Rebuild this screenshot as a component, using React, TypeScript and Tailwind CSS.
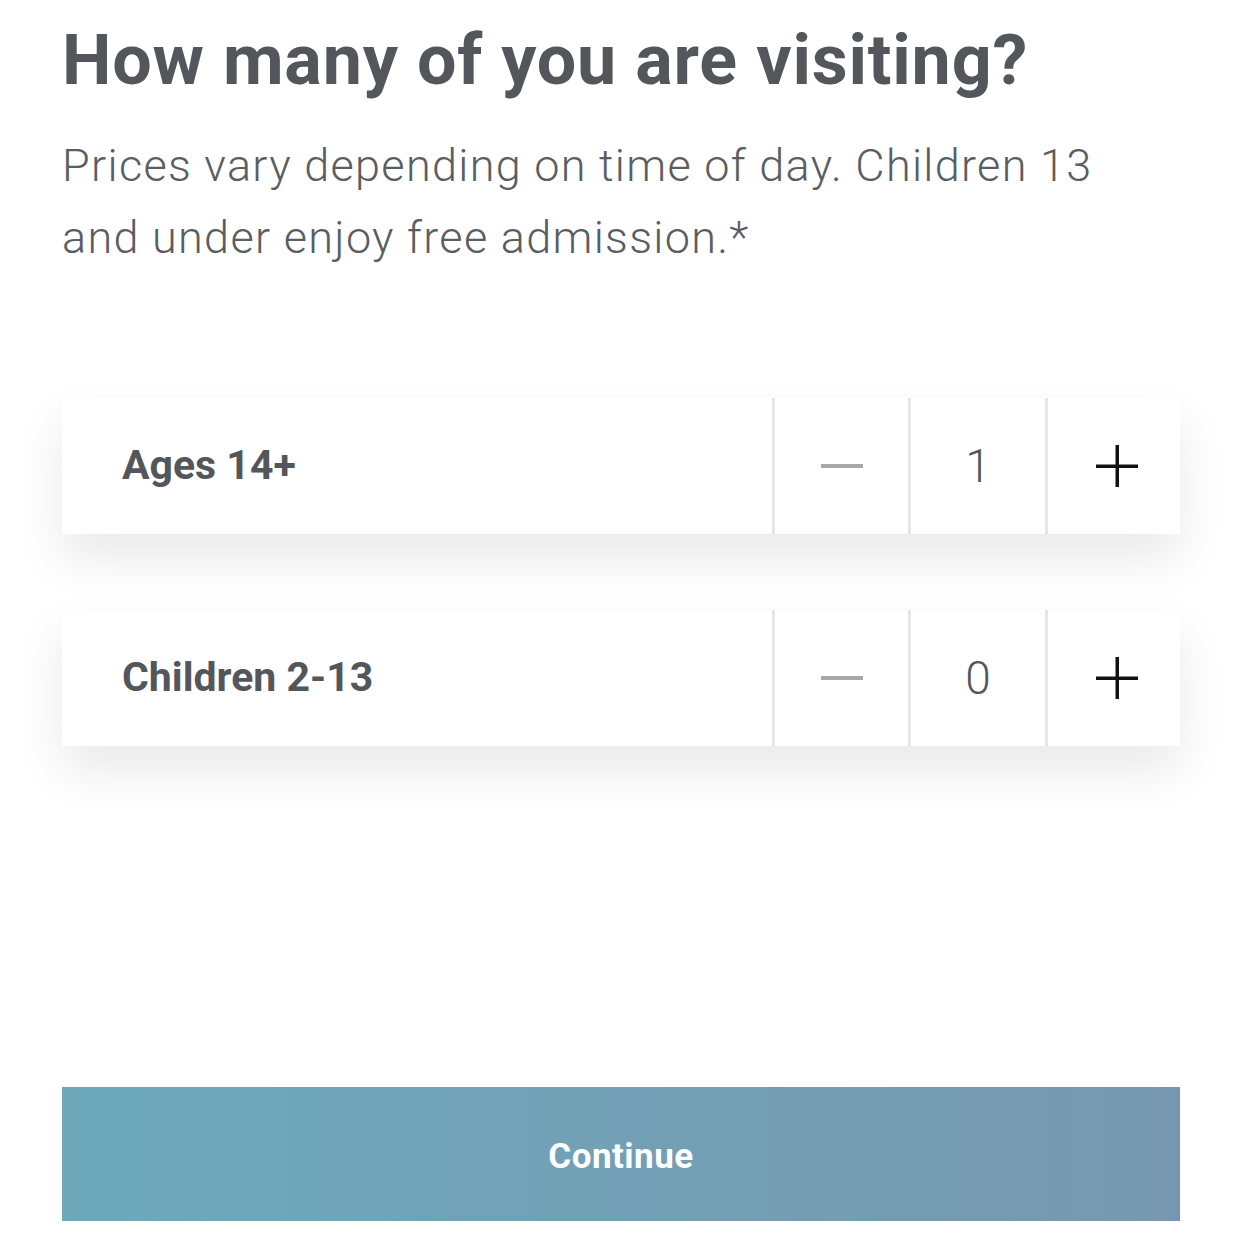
import React from "react";

function Minus() {
  return (
    <svg width="42" height="6" viewBox="0 0 42 6">
      <rect x="0" y="1" width="42" height="4" fill="#a8a8a8" />
    </svg>
  );
}

function Plus() {
  return (
    <svg width="42" height="42" viewBox="0 0 42 42">
      <rect x="0" y="19.5" width="42" height="3.5" fill="#111" />
      <rect x="19.5" y="0" width="3.5" height="42" fill="#111" />
    </svg>
  );
}

function Row({ label, value }: { label: string; value: string }) {
  return (
    <div className="flex h-[136px] bg-white shadow-[0_24px_50px_rgba(0,0,0,0.09)]">
      <div className="flex flex-1 items-center pl-[60px] text-[41px] font-bold text-[#53565a]">
        {label}
      </div>
      <div className="flex w-[136px] items-center justify-center border-l-[3px] border-[#e6e6e6]">
        <Minus />
      </div>
      <div className="flex w-[137px] items-center justify-center border-l-[3px] border-[#e6e6e6] text-[46px] font-light text-[#53565a]">
        {value}
      </div>
      <div className="flex w-[135px] items-center justify-center border-l-[3px] border-[#e6e6e6] pl-[5px]">
        <Plus />
      </div>
    </div>
  );
}

export default function App() {
  return (
    <div
      className="min-h-[1235px] w-[1242px] bg-white px-[62px]"
      style={{ fontFamily: "Roboto, 'Liberation Sans', sans-serif" }}
    >
      <h1 className="pt-[20px] text-[70px] font-bold leading-[80px] tracking-[0.8px] text-[#53565a]">
        How many of you are visiting?
      </h1>
      <p className="mt-[30px] text-[45px] font-light leading-[72px] tracking-[1.3px] text-[#5a5d61]">
        Prices vary depending on time of day. Children 13
        <br />
        and under enjoy free admission.*
      </p>
      <div className="mt-[124px] flex flex-col gap-[76px]">
        <Row label="Ages 14+" value="1" />
        <Row label="Children 2-13" value="0" />
      </div>
      <button className="mt-[341px] flex h-[134px] w-full items-center justify-center bg-gradient-to-r from-[#6da9bb] to-[#7797b0] pt-[6px] text-[35px] font-bold tracking-[0.5px] text-white">
        Continue
      </button>
    </div>
  );
}
